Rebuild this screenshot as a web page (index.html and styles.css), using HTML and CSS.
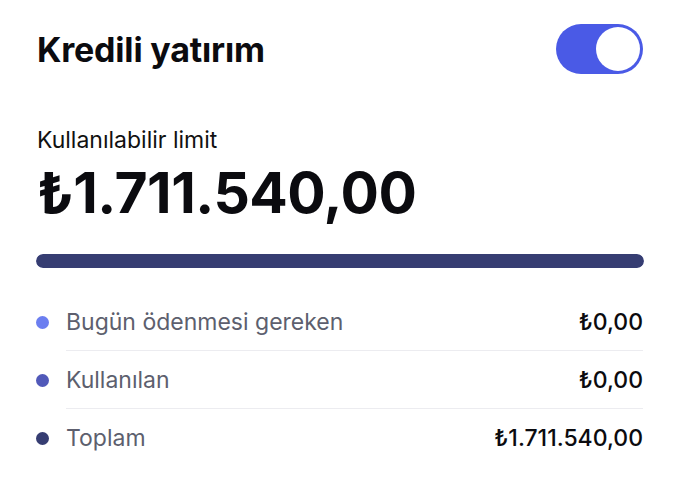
FILE: index.html
```html
<!DOCTYPE html>
<html lang="tr">

<head>
  <meta charset="UTF-8" />
  <title>Kredili yatırım</title>
  <link rel="stylesheet" href="styles.css">
</head>

<body>
  <div class="kart">
    <div class="baslik-satir">
      <h1>Kredili yatırım</h1>
      <div class="toggle acik">
        <span class="toggle-knob"></span>
      </div>
    </div>

    <div class="limit">
      <div class="limit-etiket">Kullanılabilir limit</div>
      <div class="limit-tutar">₺1.711.540,00</div>
    </div>

    <div class="bar">
      <div class="bar-dolu" style="width: 100%"></div>
    </div>

    <ul class="detay">
      <li class="detay-satir">
        <span class="nokta nokta-acik"></span>
        <div class="detay-icerik">
          <span class="detay-ad">Bugün ödenmesi gereken</span>
          <span class="detay-deger">₺0,00</span>
        </div>
      </li>
      <li class="detay-satir">
        <span class="nokta nokta-orta"></span>
        <div class="detay-icerik">
          <span class="detay-ad">Kullanılan</span>
          <span class="detay-deger">₺0,00</span>
        </div>
      </li>
      <li class="detay-satir">
        <span class="nokta nokta-koyu"></span>
        <div class="detay-icerik son">
          <span class="detay-ad">Toplam</span>
          <span class="detay-deger">₺1.711.540,00</span>
        </div>
      </li>
    </ul>
  </div>
</body>

</html>
```

FILE: styles.css
```css
/* --- BASE --- */
* {
  margin: 0;
  padding: 0;
  box-sizing: border-box;
}

body {
  background: #fff;
  font-family: "Inter", "Noto Sans", sans-serif;
  color: #0b0b0f;
}

.kart {
  padding: 24px 36px 0 37px;
}

/* --- BASLIK --- */
.baslik-satir {
  display: flex;
  justify-content: space-between;
  align-items: center;
}

h1 {
  font-size: 34px;
  font-weight: 700;
  letter-spacing: -0.2px;
}

.toggle {
  width: 87px;
  height: 50px;
  border-radius: 25px;
  background-color: #4a5ae6;
  padding: 3px;
  display: flex;
  justify-content: flex-end;
}

.toggle-knob {
  width: 44px;
  height: 44px;
  border-radius: 50%;
  background-color: #fff;
}

/* --- LIMIT --- */
.limit {
  margin-top: 52px;
}

.limit-etiket {
  font-size: 23px;
  line-height: 28px;
  color: #111;
}

.limit-tutar {
  margin-top: 4px;
  font-size: 57px;
  font-weight: 700;
  line-height: 70px;
  letter-spacing: -0.5px;
}

/* --- BAR --- */
.bar {
  margin-top: 26px;
  height: 14px;
  border-radius: 7px;
  background-color: #c9cde8;
  overflow: hidden;
  margin-right: -1px;
  margin-left: -1px;
}

.bar-dolu {
  height: 100%;
  background-color: #363d72;
  border-radius: 7px;
}

/* --- DETAY --- */
.detay {
  list-style: none;
  margin-top: 25px;
}

.detay-satir {
  display: flex;
  align-items: center;
  gap: 17px;
}

.nokta {
  width: 13px;
  height: 13px;
  border-radius: 50%;
  flex-shrink: 0;
  margin-left: -1px;
}

.nokta-acik {
  background-color: #6b7ef0;
}

.nokta-orta {
  background-color: #5159b9;
}

.nokta-koyu {
  background-color: #363d72;
}

.detay-icerik {
  flex: 1;
  display: flex;
  justify-content: space-between;
  align-items: center;
  height: 58px;
  border-bottom: 1px solid #ececf0;
}

.detay-icerik.son {
  border-bottom: none;
}

.detay-ad {
  font-size: 23px;
  color: #5d5f6e;
}

.detay-deger {
  font-size: 23px;
  font-weight: 500;
  color: #0b0b0f;
}
```
